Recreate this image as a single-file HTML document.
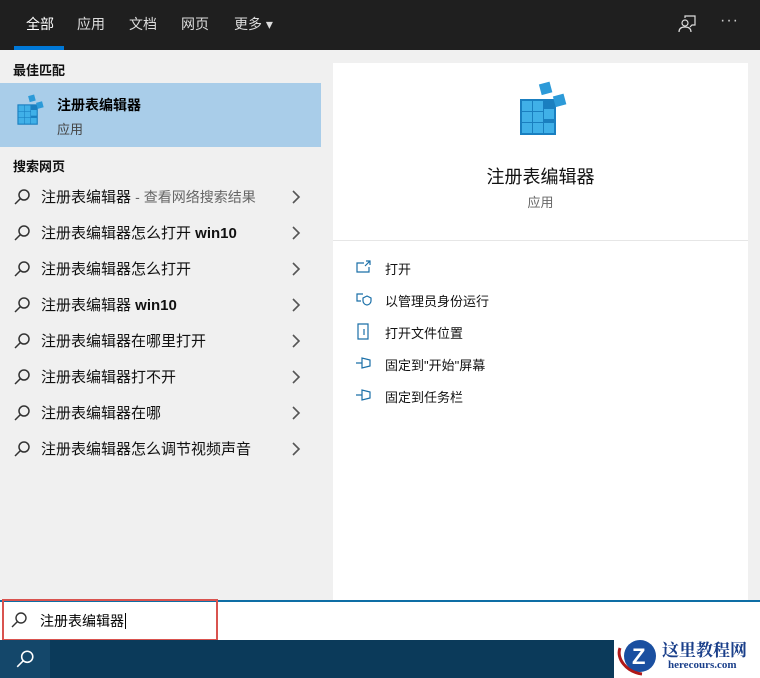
<!DOCTYPE html>
<html><head><meta charset="utf-8">
<style>
*{margin:0;padding:0;box-sizing:border-box}
body{width:760px;height:678px;overflow:hidden;background:#f0f0f0;font-family:"Liberation Sans","Noto Sans CJK SC",sans-serif;position:relative;color:#000}
.top{position:absolute;left:0;top:0;width:760px;height:50px;background:#1f1f1f}
.tab{position:absolute;top:14px;color:#fff;font-size:14px}
.ul{position:absolute;left:14px;top:46px;width:50px;height:4px;background:#0078d7}
.h{position:absolute;left:13px;font-size:13px;font-weight:bold;color:#111}
.best{position:absolute;left:0;top:83px;width:321px;height:64px;background:#a9cde9}
.row{position:absolute;left:0;width:321px;height:36px}
.row .t{position:absolute;left:41px;top:6px;font-size:15px;color:#111}
.row .t span{color:#666;font-size:14px}
.row svg.s{position:absolute;left:13px;top:8px}
.row svg.c{position:absolute;left:291px;top:10px}
.card{position:absolute;left:333px;top:63px;width:415px;height:537px;background:#fff}
.act{position:absolute;left:52px;font-size:13px;color:#111}
.act svg{position:absolute;left:-30px;top:0}
.sb{position:absolute;left:0;top:600px;width:760px;height:40px;background:#fff;border-top:2px solid #0e6ea5}
.task{position:absolute;left:0;top:640px;width:760px;height:38px;background:#0b3a5a}
</style></head><body>
<div class="top">
<div class="tab" style="left:26px">全部</div>
<div class="tab" style="left:77px;color:#ddd">应用</div>
<div class="tab" style="left:129px;color:#ddd">文档</div>
<div class="tab" style="left:181px;color:#ddd">网页</div>
<div class="tab" style="left:234px;color:#ddd">更多 ▾</div>
<div class="ul"></div>
<svg style="position:absolute;left:678px;top:15px" width="20" height="18" viewBox="0 0 20 18" fill="none" stroke="#ddd" stroke-width="1.2"><path d="M7 3V1h10v9h-3l-2 2"/><circle cx="7" cy="8" r="3"/><path d="M1 17c0-4 3-5 6-5s6 1 6 5"/></svg>
<div style="position:absolute;left:720px;top:12px;color:#ccc;font-size:16px;letter-spacing:1px">···</div>
</div>
<div class="h" style="top:60px">最佳匹配</div>
<div class="best">
<svg style="position:absolute;left:15px;top:10px" width="32" height="34" viewBox="0 0 56 60"><rect x="4" y="20" width="36" height="36" fill="#1a7fc0"/><g fill="#40b0e8"><rect x="6" y="22" width="10" height="10"/><rect x="17" y="22" width="10" height="10"/><rect x="28" y="30" width="10" height="10"/><rect x="6" y="33" width="10" height="10"/><rect x="17" y="33" width="10" height="10"/><rect x="6" y="44" width="10" height="10"/><rect x="17" y="44" width="10" height="10"/><rect x="28" y="44" width="10" height="10"/></g><rect x="24" y="4" width="11" height="11" fill="#2c9ad8" transform="rotate(-15 29 9)"/><rect x="38" y="16" width="11" height="11" fill="#2c9ad8" transform="rotate(-15 43 21)"/></svg>
<div style="position:absolute;left:57px;top:12px;font-size:14px;font-weight:bold">注册表编辑器</div>
<div style="position:absolute;left:57px;top:36px;font-size:13px;color:#444">应用</div>
</div>
<div class="h" style="top:156px">搜索网页</div>

<div class="row" style="top:180px"><svg class="s" width="18" height="18" viewBox="0 0 18 18" fill="none" stroke="#333" stroke-width="1.5"><circle cx="11" cy="7" r="5"/><path d="M7.5 10.5L2 16"/></svg><div class="t">注册表编辑器 <span>- 查看网络搜索结果</span></div><svg class="c" width="10" height="14" viewBox="0 0 10 14" fill="none" stroke="#555" stroke-width="1.6"><path d="M2 1l6 6-6 6"/></svg></div>
<div class="row" style="top:216px"><svg class="s" width="18" height="18" viewBox="0 0 18 18" fill="none" stroke="#333" stroke-width="1.5"><circle cx="11" cy="7" r="5"/><path d="M7.5 10.5L2 16"/></svg><div class="t">注册表编辑器怎么打开 <b>win10</b></div><svg class="c" width="10" height="14" viewBox="0 0 10 14" fill="none" stroke="#555" stroke-width="1.6"><path d="M2 1l6 6-6 6"/></svg></div>
<div class="row" style="top:252px"><svg class="s" width="18" height="18" viewBox="0 0 18 18" fill="none" stroke="#333" stroke-width="1.5"><circle cx="11" cy="7" r="5"/><path d="M7.5 10.5L2 16"/></svg><div class="t">注册表编辑器怎么打开</div><svg class="c" width="10" height="14" viewBox="0 0 10 14" fill="none" stroke="#555" stroke-width="1.6"><path d="M2 1l6 6-6 6"/></svg></div>
<div class="row" style="top:288px"><svg class="s" width="18" height="18" viewBox="0 0 18 18" fill="none" stroke="#333" stroke-width="1.5"><circle cx="11" cy="7" r="5"/><path d="M7.5 10.5L2 16"/></svg><div class="t">注册表编辑器 <b>win10</b></div><svg class="c" width="10" height="14" viewBox="0 0 10 14" fill="none" stroke="#555" stroke-width="1.6"><path d="M2 1l6 6-6 6"/></svg></div>
<div class="row" style="top:324px"><svg class="s" width="18" height="18" viewBox="0 0 18 18" fill="none" stroke="#333" stroke-width="1.5"><circle cx="11" cy="7" r="5"/><path d="M7.5 10.5L2 16"/></svg><div class="t">注册表编辑器在哪里打开</div><svg class="c" width="10" height="14" viewBox="0 0 10 14" fill="none" stroke="#555" stroke-width="1.6"><path d="M2 1l6 6-6 6"/></svg></div>
<div class="row" style="top:360px"><svg class="s" width="18" height="18" viewBox="0 0 18 18" fill="none" stroke="#333" stroke-width="1.5"><circle cx="11" cy="7" r="5"/><path d="M7.5 10.5L2 16"/></svg><div class="t">注册表编辑器打不开</div><svg class="c" width="10" height="14" viewBox="0 0 10 14" fill="none" stroke="#555" stroke-width="1.6"><path d="M2 1l6 6-6 6"/></svg></div>
<div class="row" style="top:396px"><svg class="s" width="18" height="18" viewBox="0 0 18 18" fill="none" stroke="#333" stroke-width="1.5"><circle cx="11" cy="7" r="5"/><path d="M7.5 10.5L2 16"/></svg><div class="t">注册表编辑器在哪</div><svg class="c" width="10" height="14" viewBox="0 0 10 14" fill="none" stroke="#555" stroke-width="1.6"><path d="M2 1l6 6-6 6"/></svg></div>
<div class="row" style="top:432px"><svg class="s" width="18" height="18" viewBox="0 0 18 18" fill="none" stroke="#333" stroke-width="1.5"><circle cx="11" cy="7" r="5"/><path d="M7.5 10.5L2 16"/></svg><div class="t">注册表编辑器怎么调节视频声音</div><svg class="c" width="10" height="14" viewBox="0 0 10 14" fill="none" stroke="#555" stroke-width="1.6"><path d="M2 1l6 6-6 6"/></svg></div>

<div class="card">
<svg style="position:absolute;left:183px;top:16px" width="56" height="60" viewBox="0 0 56 60"><rect x="4" y="20" width="36" height="36" fill="#1a7fc0"/><g fill="#40b0e8"><rect x="6" y="22" width="10" height="10"/><rect x="17" y="22" width="10" height="10"/><rect x="28" y="30" width="10" height="10"/><rect x="6" y="33" width="10" height="10"/><rect x="17" y="33" width="10" height="10"/><rect x="6" y="44" width="10" height="10"/><rect x="17" y="44" width="10" height="10"/><rect x="28" y="44" width="10" height="10"/></g><rect x="24" y="4" width="11" height="11" fill="#2c9ad8" transform="rotate(-15 29 9)"/><rect x="38" y="16" width="11" height="11" fill="#2c9ad8" transform="rotate(-15 43 21)"/></svg>
<div style="position:absolute;left:0;width:415px;top:100px;text-align:center;font-size:18px;color:#111">注册表编辑器</div>
<div style="position:absolute;left:0;width:415px;top:129px;text-align:center;font-size:13px;color:#666">应用</div>
<div style="position:absolute;left:0;top:177px;width:415px;height:1px;background:#e6e6e6"></div>
<div class="act" style="top:196px"><svg width="18" height="16" viewBox="0 0 18 16" fill="none" stroke="#1a6fa8" stroke-width="1.2"><path d="M9 4H2v9h12V8"/><path d="M11 2h4v4M15 2l-5 5"/></svg>打开</div>
<div class="act" style="top:228px"><svg width="18" height="16" viewBox="0 0 18 16" fill="none" stroke="#1a6fa8" stroke-width="1.2"><path d="M8 3H2v7h4"/><path d="M12 5l4 2v3c0 2-2 4-4 4s-4-2-4-4V7z"/></svg>以管理员身份运行</div>
<div class="act" style="top:260px"><svg width="18" height="18" viewBox="0 0 18 18" fill="none" stroke="#1a6fa8" stroke-width="1.2"><path d="M3 1h10v15H3z"/><path d="M9 6v6"/></svg>打开文件位置</div>
<div class="act" style="top:292px"><svg width="18" height="16" viewBox="0 0 18 16" fill="none" stroke="#1a6fa8" stroke-width="1.2"><path d="M1 8h6M7 3v10l8-2V5z"/></svg>固定到"开始"屏幕</div>
<div class="act" style="top:324px"><svg width="18" height="16" viewBox="0 0 18 16" fill="none" stroke="#1a6fa8" stroke-width="1.2"><path d="M1 8h6M7 3v10l8-2V5z"/></svg>固定到任务栏</div>
</div>

<div class="sb">
<svg style="position:absolute;left:10px;top:9px" width="18" height="18" viewBox="0 0 18 18" fill="none" stroke="#333" stroke-width="1.4"><circle cx="11" cy="7" r="5"/><path d="M7.5 10.5L2 16"/></svg>
<div style="position:absolute;left:40px;top:9px;font-size:14px">注册表编辑器<span style="border-left:1px solid #000;margin-left:1px"></span></div>
</div>
<div style="position:absolute;left:2px;top:599px;width:216px;height:42px;border:2px solid #d9534f"></div>
<div class="task">
<div style="position:absolute;left:0;top:0;width:50px;height:38px;background:#14476a"></div>
<svg style="position:absolute;left:15px;top:9px" width="20" height="20" viewBox="0 0 18 18" fill="none" stroke="#fff" stroke-width="1.4"><circle cx="11" cy="7" r="5"/><path d="M7.5 10.5L2 16"/></svg>
</div>
<div style="position:absolute;left:614px;top:634px;width:146px;height:44px;background:#fff">
<svg style="position:absolute;left:2px;top:2px" width="44" height="40" viewBox="0 0 44 40"><circle cx="24" cy="20" r="16" fill="#1a4fa0"/><path d="M4 12c-4 10 6 24 22 26" stroke="#b01818" stroke-width="3" fill="none"/><text x="16" y="28" font-size="22" font-weight="bold" fill="#fff" font-family="Liberation Sans">Z</text></svg>
<div style="position:absolute;left:48px;top:2px;font-size:17px;font-weight:bold;color:#1a3f8a;font-family:'Liberation Serif','Noto Serif CJK SC',serif">这里教程网</div>
<div style="position:absolute;left:54px;top:25px;font-size:11px;font-weight:bold;color:#1a3f8a;font-family:'Liberation Serif',serif">herecours.com</div>
</div>
</body></html>
